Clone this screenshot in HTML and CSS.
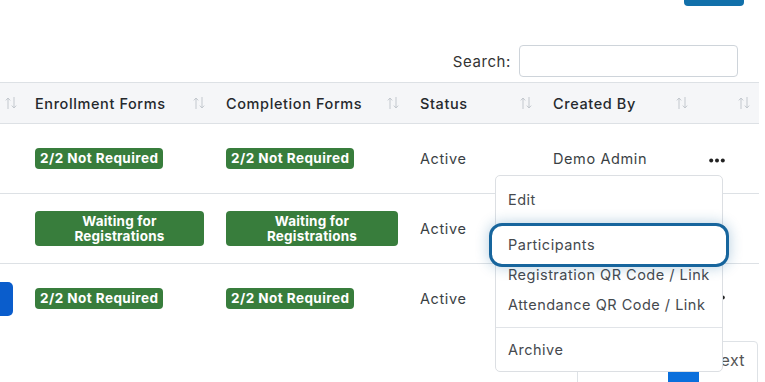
FILE: index.html
```html
<!DOCTYPE html>
<html lang="en">
<head>
  <meta charset="UTF-8" />
  <meta name="viewport" content="width=device-width, initial-scale=1" />
  <title>Events</title>
  <link rel="stylesheet" href="styles.css">
</head>
<body>
  <div class="top-actions">
    <button class="top-btn" type="button"></button>
  </div>

  <div class="search-row">
    <label for="search">Search:</label>
    <input type="search" id="search" />
  </div>

  <div class="table-wrap">
    <table class="events">
      <colgroup>
        <col style="width:23px" />
        <col style="width:191px" />
        <col style="width:194px" />
        <col style="width:133px" />
        <col style="width:156px" />
        <col style="width:62px" />
      </colgroup>
      <thead>
        <tr>
          <th class="col-cut"><div class="th-inner"><span></span><svg class="sort" width="12" height="14" viewBox="0 0 12 14"><path d="M3 13V2M0.8 4.4L3 2l2.2 2.4M9 1v11M6.8 9.6L9 12l2.2-2.4" /></svg></div></th>
          <th><div class="th-inner"><span>Enrollment Forms</span><svg class="sort" width="12" height="14" viewBox="0 0 12 14"><path d="M3 13V2M0.8 4.4L3 2l2.2 2.4M9 1v11M6.8 9.6L9 12l2.2-2.4" /></svg></div></th>
          <th><div class="th-inner"><span>Completion Forms</span><svg class="sort" width="12" height="14" viewBox="0 0 12 14"><path d="M3 13V2M0.8 4.4L3 2l2.2 2.4M9 1v11M6.8 9.6L9 12l2.2-2.4" /></svg></div></th>
          <th><div class="th-inner"><span>Status</span><svg class="sort" width="12" height="14" viewBox="0 0 12 14"><path d="M3 13V2M0.8 4.4L3 2l2.2 2.4M9 1v11M6.8 9.6L9 12l2.2-2.4" /></svg></div></th>
          <th><div class="th-inner"><span>Created By</span><svg class="sort" width="12" height="14" viewBox="0 0 12 14"><path d="M3 13V2M0.8 4.4L3 2l2.2 2.4M9 1v11M6.8 9.6L9 12l2.2-2.4" /></svg></div></th>
          <th><div class="th-inner"><span></span><svg class="sort" width="12" height="14" viewBox="0 0 12 14"><path d="M3 13V2M0.8 4.4L3 2l2.2 2.4M9 1v11M6.8 9.6L9 12l2.2-2.4" /></svg></div></th>
        </tr>
      </thead>
      <tbody>
        <tr>
          <td class="col-cut"></td>
          <td><span class="badge">2/2 Not Required</span></td>
          <td><span class="badge">2/2 Not Required</span></td>
          <td>Active</td>
          <td>Demo Admin</td>
          <td>
            <div class="dropdown">
              <button class="dots" type="button" aria-label="Actions">
                <svg width="16" height="5" viewBox="0 0 16 5"><circle cx="2.2" cy="2.5" r="2" /><circle cx="8" cy="2.5" r="2" /><circle cx="13.8" cy="2.5" r="2" /></svg>
              </button>
              <ul class="menu">
                <li><a href="#">Edit</a></li>
                <li class="focused"><a href="#">Participants</a></li>
                <li><a href="#">Registration QR Code / Link</a></li>
                <li><a href="#">Attendance QR Code / Link</a></li>
                <li class="divider"></li>
                <li><a href="#">Archive</a></li>
              </ul>
            </div>
          </td>
        </tr>
        <tr>
          <td class="col-cut"></td>
          <td><span class="badge wide">Waiting for<br>Registrations</span></td>
          <td><span class="badge wide">Waiting for<br>Registrations</span></td>
          <td>Active</td>
          <td>Demo Admin</td>
          <td><button class="dots" type="button"><svg width="16" height="5" viewBox="0 0 16 5"><circle cx="2.2" cy="2.5" r="2" /><circle cx="8" cy="2.5" r="2" /><circle cx="13.8" cy="2.5" r="2" /></svg></button></td>
        </tr>
        <tr>
          <td class="col-cut"><div class="cut-btn"></div></td>
          <td><span class="badge">2/2 Not Required</span></td>
          <td><span class="badge">2/2 Not Required</span></td>
          <td>Active</td>
          <td>Demo Admin</td>
          <td><button class="dots" type="button"><svg width="16" height="5" viewBox="0 0 16 5"><circle cx="2.2" cy="2.5" r="2" /><circle cx="8" cy="2.5" r="2" /><circle cx="13.8" cy="2.5" r="2" /></svg></button></td>
        </tr>
      </tbody>
    </table>
  </div>

  <div class="pager-row">
    <div class="pager">
      <span class="page-active"></span>
      <span class="page-next">Next</span>
    </div>
  </div>
</body>
</html>
```

FILE: styles.css
```css
body {
  margin: 0;
  font-family: Inter, "Noto Sans", sans-serif;
  color: #3a3f44;
  background: #fff;
  overflow: hidden;
}

.top-actions {
  display: flex;
  justify-content: flex-end;
  padding-right: 21px;
  height: 6px;
}

.top-btn {
  width: 60px;
  height: 6px;
  border: none;
  padding: 0;
  background: #1170aa;
  border-radius: 0 0 4px 4px;
}

.search-row {
  display: flex;
  justify-content: flex-end;
  align-items: center;
  gap: 8px;
  padding-right: 27px;
  margin-top: 39px;
}

.search-row label {
  font-size: 15px;
  letter-spacing: 0.6px;
  color: #333;
}

.search-row input {
  width: 219px;
  height: 32px;
  box-sizing: border-box;
  border: 1px solid #ced4da;
  border-radius: 4px;
}

.table-wrap {
  margin-top: 5px;
  width: 759px;
}

.events {
  width: 759px;
  table-layout: fixed;
  border-collapse: collapse;
  font-size: 14.5px;
  letter-spacing: 0.6px;
}

.events th {
  background: #f5f6f8;
  border-top: 1px solid #dde1e5;
  border-bottom: 1px solid #dde1e5;
  height: 40px;
  padding: 0 9px 0 12px;
  font-weight: 500;
  color: #25292d;
  text-align: left;
}

.th-inner {
  display: flex;
  justify-content: space-between;
  align-items: center;
  white-space: nowrap;
}

.sort {
  fill: none;
  stroke: #c3c8ce;
  stroke-width: 1;
}

.events td {
  height: 69px;
  padding: 0 10px 0 12px;
  border-bottom: 1px solid #dde1e5;
  vertical-align: middle;
  white-space: nowrap;
}

.events tbody tr:last-child td {
  border-bottom: none;
}

.events .col-cut {
  padding: 0 6px 0 0;
}

.cut-btn {
  width: 13px;
  height: 34px;
  background: #0a5dcc;
  border-radius: 0 5px 5px 0;
}

.badge {
  display: inline-block;
  background: #387d3c;
  color: #fff;
  font-size: 13.5px;
  font-weight: 700;
  letter-spacing: 0.45px;
  line-height: 21px;
  padding: 0 5px;
  border-radius: 4px;
}

.badge.wide {
  display: block;
  text-align: center;
  letter-spacing: 0.2px;
  line-height: 15px;
  padding: 3px 5px 2px;
}

.dots {
  border: none;
  background: none;
  padding: 0;
  width: 16px;
  height: 14px;
  display: flex;
  align-items: center;
  fill: #222;
  margin-top: -2px;
}

.dropdown {
  position: relative;
  display: inline-block;
}

.menu {
  position: absolute;
  top: 19px;
  right: 2px;
  width: 226px;
  margin: 0;
  padding: 9px 0 6px;
  list-style: none;
  background: #fff;
  border: 1px solid #dcdfe3;
  border-radius: 5px;
  z-index: 5;
  letter-spacing: 0.5px;
}

.menu a {
  display: block;
  padding: 0 12px;
  line-height: 30px;
  font-size: 14.5px;
  color: #45494e;
  text-decoration: none;
}

.menu .focused {
  margin-top: 15px;
}

.menu .focused a {
  position: relative;
  z-index: 1;
  background: #fff;
  border-radius: 6px;
  outline: 3px solid #17659d;
  outline-offset: 4.5px;
  box-shadow: 0 0 0 5px #fff, 0 0 14px 7px rgba(23, 101, 157, 0.32);
}

.menu .divider {
  height: 1px;
  margin: 7px 0;
  background: #e1e4e8;
}

.pager-row {
  display: flex;
  justify-content: flex-end;
  padding-right: 7px;
  margin-top: 8px;
}

.pager {
  display: flex;
  width: 181px;
  height: 50px;
  border: 1px solid #dee2e6;
  border-radius: 4px;
  box-sizing: border-box;
  padding-left: 90px;
}

.page-active {
  width: 31px;
  height: 24px;
  margin-top: 26px;
  background: #0a6fdc;
}

.page-next {
  margin-left: auto;
  padding: 8px 12px 0 0;
  font-size: 16px;
  letter-spacing: 0.4px;
  color: #555;
}
```
